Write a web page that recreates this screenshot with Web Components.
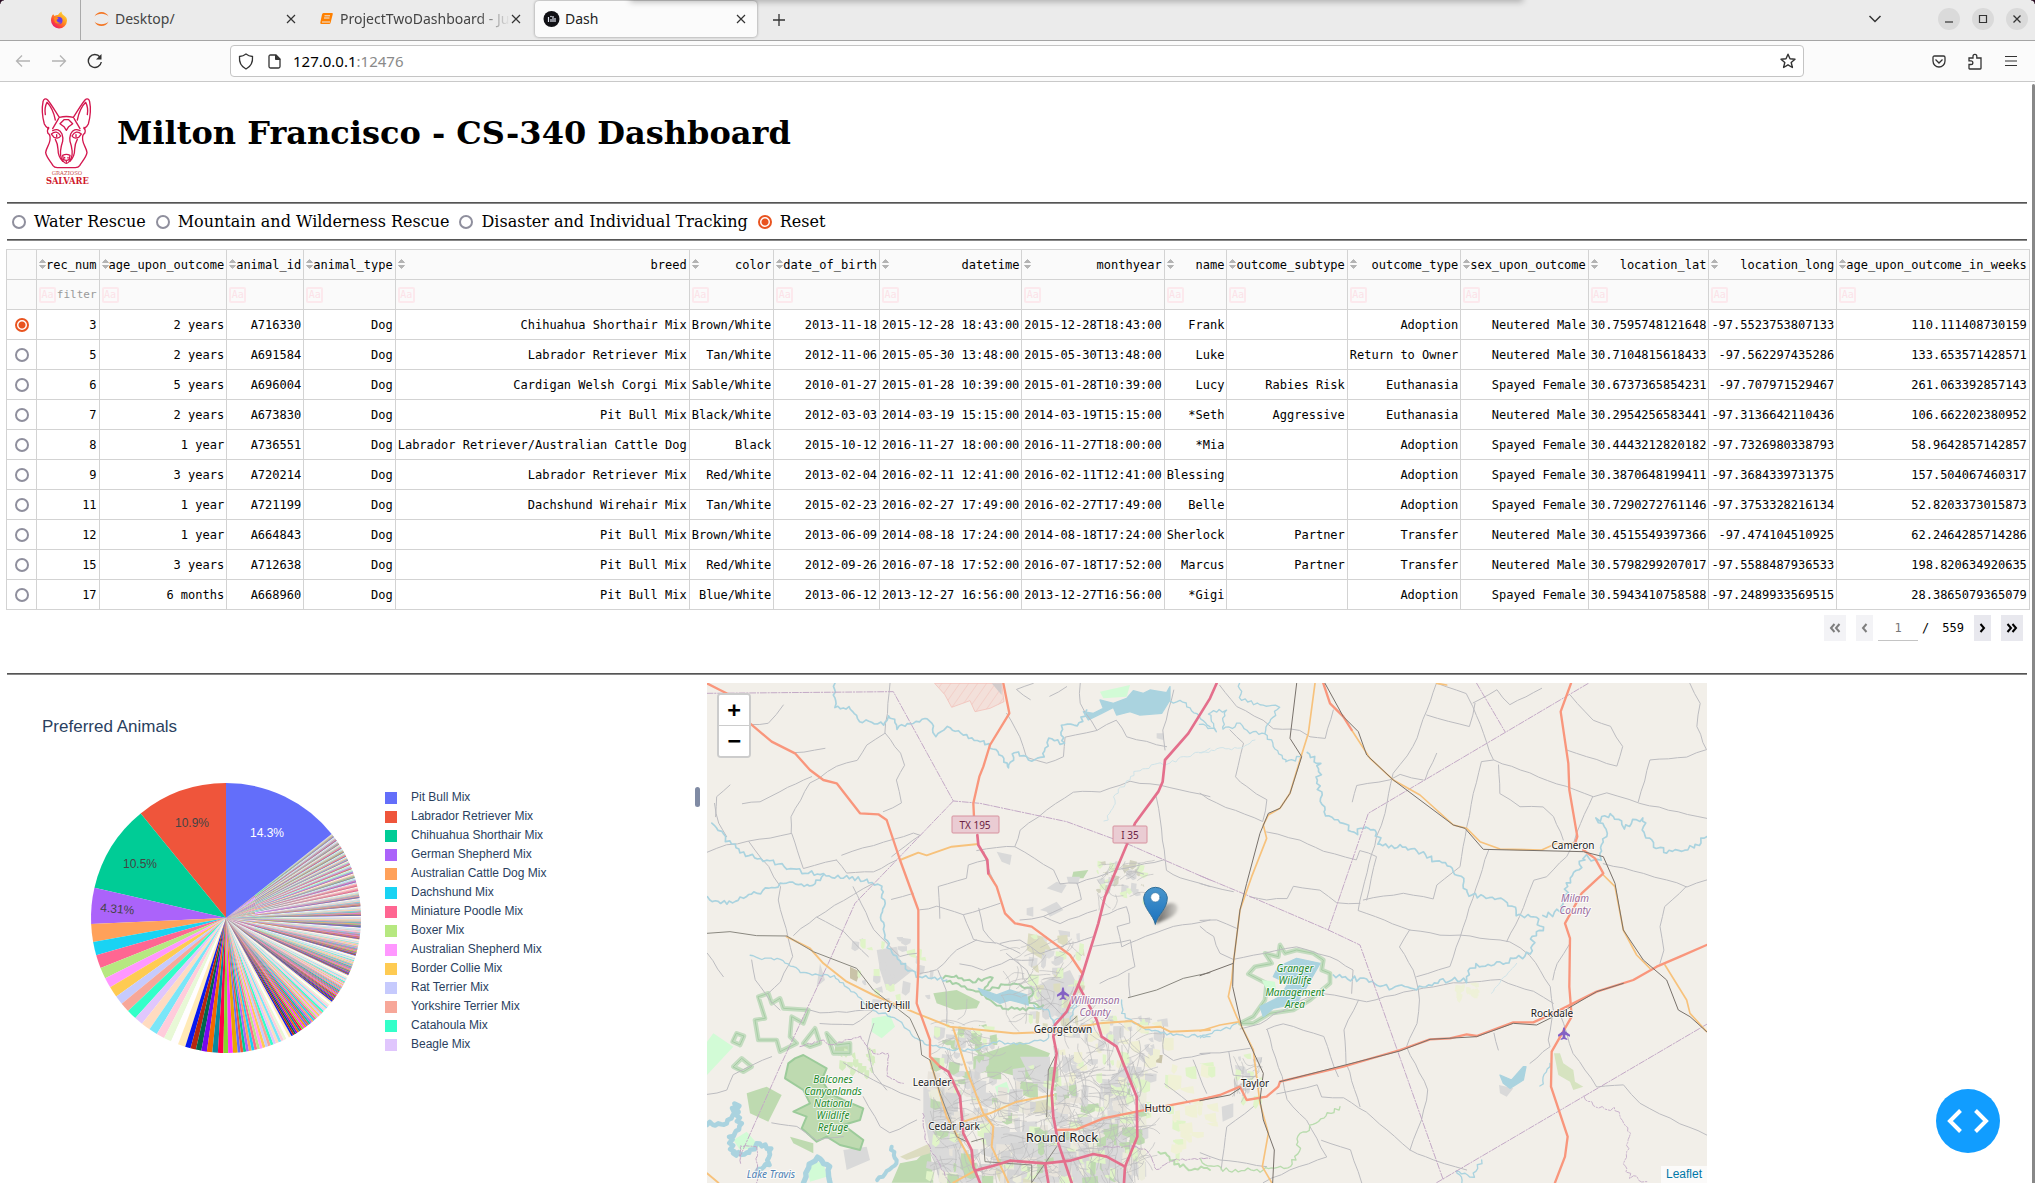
<!DOCTYPE html>
<html lang="en">
<head>
<meta charset="utf-8">
<title>Dash</title>
<style>
  html, body { height: 100%; }
  body { margin: 0; background: #fff; color: #000; font-family: "DejaVu Serif", serif; font-size: 16px; overflow: hidden; }
</style>
</head>
<body>
<dash-window>
  <browser-tab slot="tabs" icon="jupyter">Desktop/</browser-tab>
  <browser-tab slot="tabs" icon="notebook" class="faded">ProjectTwoDashboard - Ju</browser-tab>
  <browser-tab slot="tabs" icon="dash" active>Dash</browser-tab>
  <page-header>Milton Francisco - CS-340 Dashboard</page-header>
  <rule-line></rule-line>
  <rescue-filter></rescue-filter>
  <rule-line></rule-line>
  <animal-table></animal-table>
  <rule-line></rule-line>
  <chart-row>
    <breed-pie>Preferred Animals</breed-pie>
    <geo-map></geo-map>
  </chart-row>
</dash-window>

<script>
const define = (name, html, init) => {
  const t = document.createElement('template');
  t.innerHTML = html;
  customElements.define(name, class extends HTMLElement {
    constructor() {
      super();
      this.attachShadow({ mode: 'open' }).append(t.content.cloneNode(true));
    }
    connectedCallback() {
      if (init && !this.ready) { this.ready = true; init(this.shadowRoot, this); }
    }
  });
};

/* ---------- browser frame ---------- */
define('dash-window', `
<style>
  :host { display: flex; flex-direction: column; height: 100vh; position: relative; overflow: hidden; }
  button { border: 0; background: none; padding: 0; margin: 0; color: #333; display: grid; place-items: center; }
  svg { display: block; fill: none; stroke: currentColor; }
  .strip { display: flex; align-items: center; height: 40px; background: #ebebeb; border-bottom: 1px solid #a5a5a5; flex: none; }
  .pin { width: 81px; height: 40px; box-sizing: border-box; padding-left: 37px; border-right: 1px solid #aaa; display: flex; align-items: center; justify-content: center; }
  .pin svg { stroke: none; }
  .tabs { display: flex; gap: 3px; margin-left: 4px; height: 40px; align-items: flex-start; padding-top: 1px; box-sizing: border-box; }
  .plus { margin-left: 12px; width: 20px; height: 20px; }
  .winctl { margin-left: auto; display: flex; align-items: center; gap: 12px; padding-right: 7px; margin-bottom: 2px; }
  .winctl button { width: 22px; height: 22px; border-radius: 50%; background: #dadada; }
  .winctl .all { background: none; margin-right: 40px; }
  .bar { display: flex; align-items: center; height: 40px; background: #fbfbfb; border-bottom: 1px solid #c9c9c9; flex: none; }
  .nav { display: flex; width: 230px; padding-left: 13px; box-sizing: border-box; gap: 16px; }
  .nav button { width: 20px; height: 20px; }
  .nav .off { color: #b4b4b4; }
  .url { flex: 1; height: 32px; box-sizing: border-box; border: 1px solid #c4c4c4; border-radius: 4px; background: #fff; display: flex; align-items: center; gap: 10px; padding: 0 6px; font: 15px/20px "Noto Sans", sans-serif; }
  .url span { color: #8a8a8a; }
  .url div { flex: 1; }
  .url button { width: 18px; }
  .tools { width: 231px; display: flex; justify-content: flex-end; gap: 16px; padding-right: 14px; box-sizing: border-box; }
  .tools button { width: 20px; height: 20px; }
  .page { flex: 1; overflow: hidden; padding: 0 8px 0 7px; }
  .thumb { position: absolute; right: 0; top: 84px; bottom: 4px; width: 3px; background: #888; border-radius: 2px 2px 0 0; }
  .shade { position: absolute; left: 632px; right: 514px; top: -12px; height: 12px; box-shadow: 0 0 6px 2px rgba(0,0,0,.26); }
  .corner { position: absolute; top: 0; width: 4px; height: 4px; background: radial-gradient(circle at 100% 100%, transparent 3px, #2a0d22 4px); left: 0; }
  .corner.r { left: auto; right: 0; background: radial-gradient(circle at 0 100%, transparent 3px, #2a0d22 4px); }
  .debug { position: absolute; right: 35px; bottom: 34px; width: 64px; height: 64px; border-radius: 50%; background: #119dff; color: #fff; }
</style>
<div class="strip">
  <div class="pin"><svg width="18" height="18" viewBox="0 0 18 18">
    <defs><linearGradient id="f" x1="1" y1="0" x2=".2" y2="1"><stop offset="0" stop-color="#fff14a"/><stop offset=".45" stop-color="#ff9a1f"/><stop offset=".75" stop-color="#ff4538"/><stop offset="1" stop-color="#e0147a"/></linearGradient></defs>
    <path d="M9 17.5A8 8 0 0 1 1 9.300C1 7 2 4.500 3.200 3.300L4.500 5C6 4 6.500 4.200 8 4 9 2.500 10 1.500 11.500.5 11.500 2 12.500 3.500 14 4.500 16.300 6 17 7.500 17 9.800A8 8 0 0 1 9 17.500Z" fill="url(#f)"/>
    <circle cx="9" cy="9.500" r="3.500" fill="#6b3be8"/><path d="M4 7C6 5.500 8 6.500 8.500 7.500L6.500 9C7 11 9 12 11 11.500 9 13.500 5 13 4.500 10Z" fill="#ff8a1c"/></svg></div>
  <div class="tabs"><slot name="tabs"></slot></div>
  <button class="plus" aria-label="New tab"><svg width="14" height="14"><path d="M7 1v12M1 7h12" stroke-width="1.300"/></svg></button>
  <div class="winctl">
    <button class="all" aria-label="List all tabs"><svg width="14" height="10"><path d="M1.500 2L7 7.500 12.500 2" stroke-width="1.500"/></svg></button>
    <button aria-label="Minimize"><svg width="10" height="10"><path d="M1 8h8" stroke-width="1.200"/></svg></button>
    <button aria-label="Maximize"><svg width="10" height="10"><path d="M1.500 1.500h7v7h-7z" stroke-width="1.200"/></svg></button>
    <button aria-label="Close window"><svg width="10" height="10"><path d="M1.500 1.500l7 7M8.500 1.500l-7 7" stroke-width="1.300"/></svg></button>
  </div>
</div>
<div class="bar">
  <div class="nav">
    <button class="off" aria-label="Back"><svg width="16" height="14"><path d="M15 7H1.500M7 1.500L1.500 7 7 12.500" stroke-width="1.300"/></svg></button>
    <button class="off" aria-label="Forward"><svg width="16" height="14"><path d="M1 7h13.500M9 1.500L14.500 7 9 12.500" stroke-width="1.300"/></svg></button>
    <button aria-label="Reload"><svg width="16" height="16"><path d="M14.300 9A6.500 6.500 0 1 1 13 4" stroke-width="1.400"/><path d="M14.500 1v5.500H9z" fill="currentColor" stroke="none"/></svg></button>
  </div>
  <div class="url">
    <button aria-label="Tracking protection"><svg width="16" height="17"><path d="M8 1C6 2.600 4 3.300 1.500 3.500 1 9 3 13.500 8 16 13 13.500 15 9 14.500 3.500 12 3.300 10 2.600 8 1Z" stroke-width="1.300"/></svg></button>
    <button aria-label="Site information"><svg width="13" height="15"><path d="M8 1H2.500Q1 1 1 2.500v10Q1 14 2.500 14h8Q12 14 12 12.500V5z" stroke-width="1.300"/><path d="M7.500 1v4.500H12z" fill="currentColor"/></svg></button>
    <div>127.0.0.1<span>:12476</span></div>
    <button aria-label="Bookmark"><svg width="16" height="16"><path d="M8 1.200l2 4.600 5 .4-3.800 3.300 1.200 5L8 11.800l-4.400 2.700 1.200-5L1 6.200l5-.4z" stroke-width="1.400" stroke-linejoin="round"/></svg></button>
  </div>
  <div class="tools">
    <button aria-label="Pocket"><svg width="14" height="13"><path d="M1 2.500Q1 1 2.500 1h9Q13 1 13 2.500V6A6 6 0 0 1 1 6ZM3.500 4.500L7 8l3.500-3.500" stroke-width="1.300"/></svg></button>
    <button aria-label="Extensions"><svg width="14" height="17"><path d="M1 15.300V11.500H3A1.800 1.800 0 0 0 3 7.800H1V5H5V3.300A1.900 1.900 0 0 1 8.800 3.300V5H13V15.300Q13 16 12.300 16H1.700Q1 16 1 15.300Z" stroke-width="1.300"/></svg></button>
    <button aria-label="Menu"><svg width="12" height="12"><path d="M0 1.500h12M0 6h12M0 10.500h12" stroke-width="1.200"/></svg></button>
  </div>
</div>
<div class="page"><slot></slot></div>
<div class="shade"></div>
<div class="corner"></div><div class="corner r"></div>
<div class="thumb"></div>
<button class="debug" aria-label="Debug menu"><svg width="42" height="24" stroke-width="4"><path d="M13.500 1.500L3 12 13.500 22.500M28.500 1.500L39 12 28.500 22.500"/></svg></button>
`);

const tabIcons = {
  jupyter: '<path d="M1.500 6.500C4 .5 13 .5 15.500 6.500 12.500 2.800 4.500 2.800 1.500 6.500ZM1.500 11.500C4 17.500 13 17.500 15.500 11.500 12.500 15.200 4.500 15.200 1.500 11.500Z" fill="#f37726"/>',
  notebook: '<path d="M5.500 3h8.500q1 0 .8 1L12.500 13q-.3 1-1.300 1H3.500Q2 14 2.300 12.500L4 4.500Q4.300 3 5.500 3Z" fill="#ff8000"/><path d="M6.500 5.800h5.500M6 8h5.500M4 12h8" stroke="#ebebeb" stroke-width="1"/>',
  dash: '<circle cx="8.500" cy="9" r="8" fill="#101014"/><path d="M5.500 7v5M8 9v3M10 6v6M12 8v4" stroke="#dfe3ee" stroke-width="1.200"/><circle cx="8" cy="6.500" r=".8" fill="#dfe3ee"/>'
};
define('browser-tab', `
<style>
  :host { display: flex; align-items: center; box-sizing: border-box; width: 222px; height: 36px; padding: 0 10px 0 8px; font: 14px/20px "Noto Sans", sans-serif; color: #444; border-radius: 4px; }
  :host([active]) { background: #fbfbfb; box-shadow: 0 0 3px rgba(0,0,0,.4); color: #222; }
  span { flex: 1; margin-left: 5px; white-space: nowrap; overflow: hidden; }
  :host(.faded) span { -webkit-mask-image: linear-gradient(to left, transparent, #000 32px); mask-image: linear-gradient(to left, transparent, #000 32px); }
  button { border: 0; background: none; padding: 0; width: 12px; height: 12px; display: grid; place-items: center; }
</style>
<svg width="17" height="18" fill="none"></svg><span><slot></slot></span>
<button aria-label="Close tab"><svg width="10" height="10" stroke="#333" stroke-width="1.200"><path d="M1 1l8 8M9 1l-8 8"/></svg></button>`,
(r, h) => { r.querySelector('svg').innerHTML = tabIcons[h.getAttribute('icon')]; });

/* ---------- page pieces ---------- */
define('rule-line', `<style>:host{display:block;height:2px;box-sizing:border-box;border-top:1px solid #555;border-bottom:1px solid #888}</style>`);

define('page-header', `
<style>
  :host { display: flex; align-items: flex-start; gap: 25px; padding: 16px 0 17px 34px; }
  h1 { margin: 17px 0 0; font: bold 32px/37px "DejaVu Serif", serif; }
  svg { display: block; overflow: visible; }
</style>
<svg width="51" height="87" viewBox="123 294 153 261" fill="none" stroke="#d4174f" stroke-width="4" stroke-linecap="round" stroke-linejoin="round">
  <path d="M178 352C166 334 156 316 143 300C136 293 130 298 129 306C124 330 127 350 133 372C136 379 141 383 146 386M220 352C232 334 242 316 255 300C262 293 268 298 269 306C274 330 271 350 265 372C262 379 257 383 252 386"/>
  <path d="M166 360C162 340 154 320 141 307C135 318 134 332 136 344M232 360C236 340 244 320 257 307C263 318 264 332 262 344M178 352Q199 347 220 352M176 355L158 386M222 355L240 386"/>
  <path d="M146 382Q140 392 144 400Q152 404 150 420C148 436 138 444 137 458C140 474 152 484 159 497Q163 503 172 503H226Q235 503 239 497C246 484 258 474 261 458C260 444 250 436 248 420Q246 404 254 400Q258 392 252 382"/>
  <path d="M180 371L192 359H206L218 371L206 380L199 391L192 380ZM158 392Q176 382 186 402Q190 414 188 424C182 442 178 458 184 474Q192 490 199 490Q206 490 214 474C220 458 216 442 210 424Q208 414 212 402Q222 382 240 392"/>
  <path d="M154 402Q170 388 182 408Q176 418 162 412ZM244 402Q228 388 216 408Q222 418 236 412ZM170 404v6M228 404v6M166 418Q173 430 174 448Q174 470 188 484M232 418Q225 430 224 448Q224 470 210 484M188 466Q199 460 210 466L208 478Q199 484 190 478ZM194 472v2M204 472v2M199 482v5"/>
  <g fill="#d0182c" stroke="none" text-anchor="middle" font-family="DejaVu Serif, serif"><text x="201" y="525" font-size="16" fill="#c8524f">GRAZIOSO</text><text x="202" y="553" font-size="25" font-weight="bold">SALVARE</text></g>
</svg>
<h1><slot></slot></h1>`);

const radioCss = `input[type=radio]{appearance:none;margin:0;width:14px;height:14px;box-sizing:border-box;border:2px solid #8f8f9d;border-radius:50%;background:#fff;flex:none}
input[type=radio]:checked{border-color:#e95420;background:radial-gradient(circle,#e95420 3px,#fff 4px)}`;

define('rescue-filter', `
<style>${radioCss}
  :host { display: flex; align-items: center; gap: 10px; height: 35px; padding-left: 5px; }
  label { display: flex; align-items: center; gap: 8px; line-height: 19px; }
</style>
<label><input type="radio" name="rescue">Water Rescue</label>
<label><input type="radio" name="rescue">Mountain and Wilderness Rescue</label>
<label><input type="radio" name="rescue">Disaster and Individual Tracking</label>
<label><input type="radio" name="rescue" checked>Reset</label>`);

const columns = 'rec_num age_upon_outcome animal_id animal_type breed color date_of_birth datetime monthyear name outcome_subtype outcome_type sex_upon_outcome location_lat location_long age_upon_outcome_in_weeks'.split(' ');
const records = `3|2 years|A716330|Dog|Chihuahua Shorthair Mix|Brown/White|2013-11-18|2015-12-28 18:43:00|2015-12-28T18:43:00|Frank||Adoption|Neutered Male|30.7595748121648|-97.5523753807133|110.111408730159
5|2 years|A691584|Dog|Labrador Retriever Mix|Tan/White|2012-11-06|2015-05-30 13:48:00|2015-05-30T13:48:00|Luke||Return to Owner|Neutered Male|30.7104815618433|-97.562297435286|133.653571428571
6|5 years|A696004|Dog|Cardigan Welsh Corgi Mix|Sable/White|2010-01-27|2015-01-28 10:39:00|2015-01-28T10:39:00|Lucy|Rabies Risk|Euthanasia|Spayed Female|30.6737365854231|-97.707971529467|261.063392857143
7|2 years|A673830|Dog|Pit Bull Mix|Black/White|2012-03-03|2014-03-19 15:15:00|2014-03-19T15:15:00|*Seth|Aggressive|Euthanasia|Neutered Male|30.2954256583441|-97.3136642110436|106.662202380952
8|1 year|A736551|Dog|Labrador Retriever/Australian Cattle Dog|Black|2015-10-12|2016-11-27 18:00:00|2016-11-27T18:00:00|*Mia||Adoption|Spayed Female|30.4443212820182|-97.7326980338793|58.9642857142857
9|3 years|A720214|Dog|Labrador Retriever Mix|Red/White|2013-02-04|2016-02-11 12:41:00|2016-02-11T12:41:00|Blessing||Adoption|Spayed Female|30.3870648199411|-97.3684339731375|157.504067460317
11|1 year|A721199|Dog|Dachshund Wirehair Mix|Tan/White|2015-02-23|2016-02-27 17:49:00|2016-02-27T17:49:00|Belle||Adoption|Spayed Female|30.7290272761146|-97.3753328216134|52.8203373015873
12|1 year|A664843|Dog|Pit Bull Mix|Brown/White|2013-06-09|2014-08-18 17:24:00|2014-08-18T17:24:00|Sherlock|Partner|Transfer|Neutered Male|30.4515549397366|-97.474104510925|62.2464285714286
15|3 years|A712638|Dog|Pit Bull Mix|Red/White|2012-09-26|2016-07-18 17:52:00|2016-07-18T17:52:00|Marcus|Partner|Transfer|Neutered Male|30.5798299207017|-97.5588487936533|198.820634920635
17|6 months|A668960|Dog|Pit Bull Mix|Blue/White|2013-06-12|2013-12-27 16:56:00|2013-12-27T16:56:00|*Gigi||Adoption|Spayed Female|30.5943410758588|-97.2489933569515|28.3865079365079`.split('\n').map(l => l.split('|'));

define('animal-table', `
<style>${radioCss}
  :host { display: block; margin-top: 8px; margin-bottom: 32px; font: 12px/15px "DejaVu Sans Mono", monospace; }
  table { width: max-content; border-collapse: separate; border-spacing: 0; border-top: 1px solid #d3d3d3; border-left: 1px solid #d3d3d3; margin-left: -1px; }
  th, td { height: 30px; box-sizing: border-box; padding: 1px 2px 0; border-right: 1px solid #d3d3d3; border-bottom: 1px solid #d3d3d3; text-align: right; font-weight: normal; white-space: nowrap; }
  thead tr { background: #fafafa; }
  .pick { width: 30px; min-width: 30px; text-align: center; padding: 0; }
  .pick input { vertical-align: middle; }
  .head, .find { display: flex; align-items: center; justify-content: space-between; }
  .sort { border: 0; background: none; padding: 0; width: 7px; height: 12px; display: block; margin-bottom: 2px; }
  .sort svg { display: block; fill: #b4b4b4; stroke: #b4b4b4; stroke-linejoin: round; }
  .case { border: 2px solid #fce9ed; border-radius: 2px; background: none; color: #fce2e8; font: 10px/10px "DejaVu Sans Mono", monospace; padding: 0; width: 17px; height: 16px; flex: none; }
  .find input { border: 0; background: none; outline: 0; padding: 0; margin: 0; width: 0; flex: 1; min-width: 0; height: 20px; text-align: right; font: 11px/20px "DejaVu Sans Mono", monospace; }
  .find input::placeholder { color: #999; opacity: 1; }
  .pager { display: flex; justify-content: flex-end; align-items: center; height: 26px; padding: 5px 4px 0 0; }
  .pager button { border: 0; padding: 0; height: 26px; background: #e8e8ee; display: grid; place-items: center; }
  .pager button:disabled { opacity: .5; }
  .wide { width: 22px; } .thin { width: 17px; }
  .pager svg { fill: none; stroke: #000; stroke-width: 2; }
  .pager input { border: 0; border-bottom: 1px solid #c4c4c4; width: 40px; height: 26px; box-sizing: border-box; text-align: center; margin: 0 4px 0 5px; padding: 0; background: none; font: 12px/26px "DejaVu Sans Mono", monospace; color: #777; }
  .pager .slash { margin-right: 13px; }
  .pager .total, .pager .gap { margin-right: 10px; }
</style>
<table><thead></thead><tbody></tbody></table>
<div class="pager">
  <button class="wide gap" disabled aria-label="First page"><svg width="12" height="10"><path d="M5.500 1L2 5l3.500 4M10.500 1L7 5l3.500 4"/></svg></button>
  <button class="thin" disabled aria-label="Previous page"><svg width="7" height="10"><path d="M5.500 1L2 5l3.500 4"/></svg></button>
  <input aria-label="Page" value="1"><span class="slash">/</span><span class="total">559</span>
  <button class="thin gap" aria-label="Next page"><svg width="7" height="10"><path d="M1.500 1L5 5 1.500 9"/></svg></button>
  <button class="wide" aria-label="Last page"><svg width="12" height="10"><path d="M1.500 1L5 5 1.500 9M6.500 1L10 5 6.500 9"/></svg></button>
</div>`, r => {
  const sort = n => `<button class="sort" aria-label="Sort by ${n}"><svg width="7" height="12"><path d="M3.500 1.500L6.500 4.500H.5zM3.500 10.500L6.500 7.500H.5z"/></svg></button>`;
  r.querySelector('thead').innerHTML =
    '<tr><th class="pick"></th>' + columns.map(c => `<th><div class="head">${sort(c)}${c}</div></th>`).join('') + '</tr>' +
    '<tr><td class="pick"></td>' + columns.map((c, i) => `<td><div class="find"><button class="case">Aa</button><input aria-label="Filter ${c}"${i ? '' : ' placeholder="filter"'}></div></td>`).join('') + '</tr>';
  r.querySelector('tbody').innerHTML = records.map((d, i) =>
    `<tr><td class="pick"><input type="radio" name="row" aria-label="Select record ${d[0]}"${i ? '' : ' checked'}></td>` +
    d.map(v => `<td>${v}</td>`).join('') + '</tr>').join('');
});

define('chart-row', `<style>:host{display:flex;align-items:flex-start;margin-top:8px}</style><slot></slot>`);

/* ---------- pie ---------- */
const baseHues = ['636efa','EF553B','00cc96','ab63fa','FFA15A','19d3f3','FF6692','B6E880','FF97FF','FECB52'];
const shade = (hex, d) => {
  const [r, g, b] = [0, 2, 4].map(i => parseInt(hex.substr(i, 2), 16) / 255);
  const mx = Math.max(r, g, b), mn = Math.min(r, g, b), l = (mx + mn) / 2, c = mx - mn;
  const s = c / (1 - Math.abs(2 * l - 1));
  const h = 60 * (mx === r ? ((g - b) / c + 6) % 6 : mx === g ? (b - r) / c + 2 : (r - g) / c + 4);
  return `hsl(${h.toFixed(1)},${(s * 100).toFixed(1)}%,${Math.max(0, Math.min(100, l * 100 + d)).toFixed(1)}%)`;
};
const palette = [0, 20, -20].flatMap(d => baseHues.map(h => shade(h, d)));
const breeds = ['Pit Bull Mix','Labrador Retriever Mix','Chihuahua Shorthair Mix','German Shepherd Mix','Australian Cattle Dog Mix','Dachshund Mix','Miniature Poodle Mix','Boxer Mix','Australian Shepherd Mix','Border Collie Mix','Rat Terrier Mix','Yorkshire Terrier Mix','Catahoula Mix','Beagle Mix'];

define('breed-pie', `
<style>
  :host { display: block; width: 700px; height: 500px; flex: none; box-sizing: border-box; padding: 33px 7px 0 35px; color: #2a3f5f; font: 12px/19px "Liberation Sans", sans-serif; }
  h2 { margin: 0 0 44px; font: 17px/22px "Liberation Sans", sans-serif; }
  .plot { display: flex; align-items: flex-start; }
  .pie { display: block; margin-left: 48px; }
  ul { list-style: none; margin: 6px 0 0 23px; padding: 0; flex: 1; }
  li { display: flex; align-items: center; gap: 14px; height: 19px; }
  li i { width: 12px; height: 12px; }
  .bar { width: 5px; height: 20px; border-radius: 3px; background: #808ba4; margin-top: 5px; }
</style>
<h2><slot></slot></h2>
<div class="plot"><svg class="pie" width="272" height="272" viewBox="-136 -136 272 272"></svg><ul></ul><div class="bar"></div></div>`, r => {
  const knots = [[1,-90],[2,-50.8],[3,-13],[4,2.6],[5,10.2],[6,16],[7,21.7],[8,26.5],[9,30.9],[10,35.6],[11,39.4],[12,43.5],[13,47.8],[14,51.5],[15,55.5],[16,59.2],[17,62.7],[18,66],[19,69.2],[20,72.4],[27,88.9],[30,95],[50,119],[80,141.7],[110,155],[140,163.8],[170,170.9],[200,176],[230,181],[260,185],[290,188.5],[320,191.5],[735,218.5]];
  const at = deg => { const a = (deg + 90) * Math.PI / 180; return (-135 * Math.sin(a)).toFixed(2) + ' ' + (-135 * Math.cos(a)).toFixed(2); };
  const wedge = (a, b, c) => `<path d="M0 0L${at(a)}A135 135 0 0 0 ${at(b)}Z" fill="${c}"/>`;
  let out = '';
  for (let k = 0; k < knots.length - 1; k++) {
    const [i0, a0] = knots[k], [i1, a1] = knots[k + 1], st = (a1 - a0) / (i1 - i0);
    for (let i = i0; i < i1; i++) out += wedge(a0 + (i - i0) * st, a0 + (i - i0 + 1) * st, palette[i % 30]);
  }
  out += wedge(218.5, 270, palette[0]);
  out += '<g font-size="12" text-anchor="middle" fill="#444"><text x="41" y="-81" fill="#fff">14.3%</text><text x="-34" y="-91">10.9%</text><text x="-86" y="-50">10.5%</text><text transform="translate(-109 -5) rotate(5)">4.31%</text></g>';
  r.querySelector('.pie').innerHTML = out;
  r.querySelector('ul').innerHTML = breeds.map((b, i) => `<li><i style="background:${palette[i]}"></i>${b}</li>`).join('');
});

/* ---------- map ---------- */
let seed = 7;
const rnd = () => (seed = (seed * 16807) % 2147483647) / 2147483647;
const pts = s => { const n = s.trim().split(/[ ,]+/).map(Number), o = []; for (let i = 0; i < n.length; i += 2) o.push([n[i], n[i + 1]]); return o; };
const wiggle = (s, amp, step = 9) => {
  const p = pts(s), o = [];
  for (let i = 0; i < p.length - 1; i++) {
    const [x, y] = p[i], dx = p[i + 1][0] - x, dy = p[i + 1][1] - y, L = Math.hypot(dx, dy), n = Math.max(1, Math.round(L / step));
    for (let k = 0; k < n; k++) { const j = (rnd() - .5) * 2 * amp; o.push([x + dx * k / n - dy / L * j, y + dy * k / n + dx / L * j]); }
  }
  o.push(p[p.length - 1]);
  return o;
};
const line = (p, color, w, extra = '') => `<polyline points="${p.map(q => q.map(v => v.toFixed(1)).join()).join(' ')}" stroke="${color}" stroke-width="${w}" ${extra}/>`;
const many = (list, color, w, extra, amp = 0, step) => list.map(s => line(amp ? wiggle(s, amp, step) : pts(s), color, w, extra)).join('');
const area = (list, color, extra = '') => list.map(s => `<polygon points="${s}" fill="${color}" ${extra}/>`).join('');
const scatter = (n, x0, y0, x1, y1, size, colors) => {
  let o = '';
  for (let i = 0; i < n; i++) {
    const x = x0 + rnd() * (x1 - x0), y = y0 + rnd() * (y1 - y0), w = size * (.4 + rnd()), h = size * (.4 + rnd()), k = (rnd() - .5) * 14;
    o += `<path d="M${x.toFixed(0)} ${y.toFixed(0)}l${w.toFixed(0)} ${k.toFixed(0)} ${(-k / 2).toFixed(0)} ${h.toFixed(0)} ${(-w / 2).toFixed(0)} ${(k + 4).toFixed(0)} ${(-w / 2).toFixed(0)} -8z" fill="${colors[Math.floor(rnd() * colors.length)]}"/>`;
  }
  return o;
};
const streets = (n, x0, y0, x1, y1, len) => {
  let o = '';
  for (let i = 0; i < n; i++) {
    let x = x0 + rnd() * (x1 - x0), y = y0 + rnd() * (y1 - y0), a = (rnd() < .5 ? -.3 : Math.PI / 2 - .3) + (rnd() - .5) * .8, d = `M${x.toFixed(0)} ${y.toFixed(0)}`;
    const bend = (rnd() - .5) * .9;
    for (let k = 0; k < 6; k++) { x += Math.cos(a) * len / 6; y += Math.sin(a) * len / 6; a += bend * rnd() + (rnd() - .5) * .3; d += `L${x.toFixed(0)} ${y.toFixed(0)}`; }
    o += `<path d="${d}"/>`;
  }
  return `<g stroke="#bcbcbe" stroke-width="2">${o}</g>`;
};

function drawMap() {
  const water = '#aad3df', grey = '#d9d9d9', wood = '#bedab0', park = '#d2fbd6', lime = '#e0f4c8';
  const minorL = ['21,545 80,525 145,515 275,490 310,595 410,570', '145,515 205,590 240,650 235,690 280,860 240,935 205,970', '275,490 272,440 330,340 410,290 470,270 500,225 555,190 570,40', '555,190 600,250 612,285 590,330 605,400 550,425', '127,400 180,395 240,365 335,320', '45,440 50,380 90,345', '45,400 55,460 80,500', '150,165 205,160 250,105', '280,250 375,235', '410,570 440,610 520,605 590,570', '425,555 520,525 640,490 660,495 575,560', '350,740 430,690 520,640', '280,795 350,740 430,785 505,860', '460,650 520,780 600,860 650,850', '575,690 640,670', '660,720 710,710 790,735 900,700', '720,745 715,650 800,625 805,585 860,570', '790,735 820,810 890,820 960,850', '660,910 710,900 770,840 830,810', '715,900 740,960 740,1060', '780,880 850,900 930,870 1000,870', '830,540 920,530 945,530 1060,600 1080,640 1130,640 1145,690 1030,740 960,750', '850,545 870,610 890,650', '945,530 960,480 1040,420 1120,365 1200,365 1290,335 1380,345 1530,380', '920,130 960,200 980,260 1040,280 1090,260 1095,200 1190,180 1250,150 1280,200 1400,230', '1140,40 1140,100 1190,180', '1370,380 1380,450 1400,600 1440,625 1530,650', '1130,640 1250,600 1390,570', '1030,740 1080,760 1190,720', '1050,840 1180,800', '1200,740 1280,710 1290,760 1250,770 1265,830 1310,810 1420,770 1530,750', '1180,830 1290,810 1305,890 1200,940', '1285,910 1290,980', '920,850 980,900 1020,970 1080,1030', '900,820 960,810 1020,850 1090,830', '330,1020 360,1030 440,1025 520,1020', '360,1060 460,1065 520,1020', '155,870 165,930 210,990 240,1020', '21,850 70,920', '21,1275 80,1260 100,1215 160,1185 215,1160', '520,1060 500,1130 520,1210 560,1260', '430,1180 520,1230 600,1270 660,1290', '490,1280 540,1370 570,1390 650,1350', '215,1360 290,1370 350,1410 430,1400', '1390,1070 1390,1150 1420,1170 1530,1150', '1480,1170 1520,1270', '1395,1240 1470,1300', '990,90 950,60 1000,40', '1050,80 1100,50', '1420,60 1390,180 1395,240', '835,715 850,780 885,820'];
  const minorR = ['0,370 50,400 190,455 200,390 140,350 105,320 130,220 90,180', '60,45 110,110 190,150 220,175 300,180 330,200 375,205 400,120', '710,40 640,230 580,310 555,430 530,500 480,690 475,720 630,780 720,795 780,795 930,815 990,855 1050,950 1060,1020', '710,40 800,70 820,110 880,270 1180,380 1220,370 1320,400 1520,445', '680,135 810,170 825,100', '820,100 890,60 930,105 1025,55', '1110,75 1180,150 1230,170 1270,230 1250,290 1100,240', '1470,40 1500,100 1490,170 1520,240 1460,260 1350,270 1315,395', '880,270 845,275 820,370 800,470 780,590 710,645 700,685 610,670 490,690', '200,485 300,510 370,545 470,570 480,540 530,560 500,690', '150,680 200,690 260,685 280,650 360,660 410,700 480,700', '895,285 900,370 960,410 1030,410 1060,440 1090,510', '1180,380 1140,460 1120,520 1100,560 1040,620 1000,630 960,740 920,815', '1210,580 1330,610 1400,630 1460,650 1520,630', '1460,650 1395,710 1380,770 1390,840 1380,880', '865,540 750,890 650,920', '630,780 600,830 640,900 660,990 650,1060 620,1130 685,1260 665,1350 630,1440', '0,640 100,665', '0,750 50,750 110,775', '0,770 40,800 60,850 100,870 190,850 290,830 390,860 460,900 455,970', '370,970 500,995 640,960 760,940 900,930 1000,965 1060,1000', '120,1075 180,1060 220,1035 330,980', '200,1080 250,1060 370,1100 415,1220', '200,1080 245,1220 260,1290 320,1350 380,1460 270,1500 190,1538', '475,990 430,1080 440,1180 480,1310', '230,1270 350,1245 365,1280 430,1285 500,1325 560,1380 630,1440 700,1470 800,1500', '0,1150 60,1150 150,1135', '85,1145 100,1215 170,1220', '0,1450 60,1470 140,1480 200,1490', '65,1500 80,1370 160,1310', '365,1410 450,1440 485,1538', '1060,1020 1045,1110 1050,1130 990,1180', '1080,1030 1120,1150 1190,1250 1270,1245 1320,1300 1440,1360 1520,1395', '880,1090 895,1140', '455,395 470,345 570,330 600,315 670,330', '675,330 710,250', '1060,930 1070,880 1110,820'];
  const riverL = ['400,40 405,110 455,115 480,150 550,165 570,135 590,175 640,160 685,145 705,195 740,175 850,215 880,235 930,295 945,245 985,270 1030,260 1045,210 1090,220 1085,170 1140,160 1160,120', '35,460 80,510 130,550 200,570 280,600 370,615 500,630 540,650 550,700 545,760 570,840 605,880 650,915 740,930', '21,685 80,700 180,665 260,640 330,650 370,615'];
  const creekL = ['150,860 240,870 310,910 400,920 460,970 520,1020 600,1050 650,1110 740,1140 830,1140 880,1115 950,1120 1040,1110 1060,1060 1130,1000 1110,1050', '1265,990 1265,1030 1320,1070 1420,1095 1530,1100', '1410,95 1450,95 1530,170', '1000,1010 1040,1020 1060,1060'];
  const riverR = ['320,250 360,280 355,330 370,430 430,460 470,490 500,465 530,480 540,530 600,525 660,545 740,590 780,620 800,670 850,680 920,690 950,730 1000,740 1030,770 1000,800 990,850 900,880 820,890 800,930 720,930 650,955 550,950 480,930 400,915', '1030,740 1090,720 1100,640 1140,600 1150,560 1200,570 1215,480 1190,450 1240,430 1270,470 1325,445 1345,510 1400,550 1480,530 1520,500'];
  const creekR = ['0,160 50,185 25,130 75,120 70,180 120,160 150,185 195,190 260,280 300,260', '115,40 125,90 180,105 235,110 195,190', '0,1100 80,1075 110,1060', '790,1538 770,1500 820,1520 845,1470', '1025,1250 1050,1180'];
  const orangeL = ['21,40 60,60 90,75', '150,160 215,215 285,250 330,300 370,330 410,340 480,430 535,433 560,450 600,570 655,720 655,900 650,1000 690,1110 690,1160 720,1190', '910,40 928,130 870,225 850,290 838,320 820,400 822,440', '865,610 890,650 915,730 945,760 995,770 1110,855 1148,912', '1070,1380 1130,1378 1210,1345 1310,1325 1530,1283'];
  const orangeR = ['370,40 390,100 430,140 455,180', '1113,40 1082,125 1105,280 1108,360 1132,500 1125,520', '1150,540 1185,565 1210,610 1145,670 1095,760 1110,805 1108,950 1115,1040 1055,1145 1053,1250 1103,1400 1095,1460 1065,1538', '0,1290 60,1275 120,1250 140,1290 200,1280 235,1250 240,1235 430,1190 600,1140 690,1108 750,1105 800,1093 830,1098 940,1057 1000,1057 1070,1025 1190,965 1300,930 1370,890 1440,860 1520,825'];
  const yellowL = ['260,800 330,835 370,880 440,935 520,975 650,1030 750,1070 940,1090 1060,1085 1200,1060 1295,1053 1330,1073 1380,1070 1410,1085 1530,1080', '600,570 655,548 680,556 755,530 835,522', '760,1075 800,1200 850,1330 880,1370 875,1430 925,1538', '790,1355 870,1330 950,1295 1060,1275', '690,1170 740,1340 800,1450 820,1490', '760,1538 820,1505', '21,1510 55,1538'];
  const yellowR = ['345,40 325,190 300,270 270,370 240,415 205,435 190,465 200,505 155,620 120,720 100,880 95,930 85,980 110,1040 160,1140 180,1300 205,1390 187,1490 215,1538', '455,180 510,265 580,330 660,375 760,465 800,475 840,515 900,537 1025,540 1070,520 1120,520', '1210,615 1245,650 1270,780 1310,855 1350,895', '1395,885 1460,990 1470,1030 1520,1085', '0,1083 60,1065 120,1055', '710,40 740,45'];
  const railL = ['21,790 90,785 170,797 260,798 340,845 470,895 520,960 630,1045 660,1110 665,1155 690,1170 720,1270 770,1400 800,1415', '1040,1340 1045,1200 1070,1150 1060,1100 1130,1040', '815,1415 850,1405 855,1475 920,1480 995,1485 995,1538 1070,1430', '1285,983 1370,960 1450,925 1530,908'];
  const railR = ['290,40 270,205 305,260 270,370 240,415 205,430 180,490 140,640 120,720 100,880 98,950 125,1070 190,1210 180,1290 190,1350 223,1440 218,1538', '375,40 430,140 475,185 500,255 580,330 760,465 795,475 850,538 1150,545 1210,560 1245,640 1270,780 1330,870 1400,930 1435,1020 1470,1040 1520,1085', '0,917 100,880', '0,1292 90,1275 120,1255', '240,1235 600,1143 690,1108 830,1100 940,1060 1010,1065 1070,1035 1190,965 1270,940'];
  const boundL = ['21,70 580,65 760,393 840,400 1100,455 1290,525 1530,630', '760,393 465,700 385,880 240,1190 120,1460'];
  const boundR = ['0,617 140,675 385,780 505,430 1165,40', '385,780 480,825 730,1530', '830,40 915,185', '710,1538 1150,1280 1520,1063'];
  const dash = 'stroke-dasharray="18 5 4 5"';
  const reserve = ['285,1165 310,1155 380,1195 365,1230 390,1270 430,1290 490,1315 480,1350 430,1365 490,1410 480,1440 420,1425 380,1400 350,1415 305,1375 320,1340 280,1325 330,1300 310,1260 255,1225 265,1180'];
  const outlines = ['175,980 205,970 215,1000 240,985 250,1015 325,1020 310,1060 275,1040 270,1100 290,1120 240,1145 230,1110 175,1110 165,1050 195,1045', '110,1090 132,1098 120,1125 98,1115', '310,1120 345,1075 360,1120 330,1130', '380,1090 410,1125 450,1120 450,1150 400,1150', '100,1190 125,1165 155,1190 130,1205', '1665,890 1645,912 1700,940 1695,990 1660,1040 1620,1060 1660,1060 1710,1030 1780,1020 1830,990 1890,940 1890,910 1865,900 1870,870 1840,850 1790,840 1755,850 1740,825 1735,860 1695,850 1715,880'];
  return `
  <defs><pattern id="h" width="22" height="22" patternUnits="userSpaceOnUse" patternTransform="rotate(35)"><rect width="22" height="22" fill="#f3e0da"/><path d="M0 0V22" stroke="#f2c3bb" stroke-width="3"/></pattern>
  <linearGradient id="pin" x1="0" y1="0" x2="0" y2="1"><stop offset="0" stop-color="#4a96cc"/><stop offset="1" stop-color="#1a72bf"/></linearGradient>
  <linearGradient id="cast" x1="0" y1="0" x2="1" y2="0"><stop offset="0" stop-color="#000" stop-opacity=".6"/><stop offset="1" stop-color="#000" stop-opacity=".12"/></linearGradient>
  <filter id="soft" x="-30%" y="-30%" width="160%" height="160%"><feGaussianBlur stdDeviation="5"/></filter></defs>
  <rect width="1000" height="500" fill="#f2efe9"/>
  <g transform="translate(-7 -13) scale(.33333)" fill="none" stroke-linejoin="round" stroke-linecap="round">
    ${area(['705,40 905,40 912,95 870,115 825,125 810,92 755,112 735,75'], 'url(#h)', 'stroke="#f2b8b0" stroke-width="2"')}
    ${area(['875,40 905,40 905,75'], '#d2cccc')}
    ${area(['40,1090 100,1130 21,1215 21,1115', '515,1045 570,1035 585,1070 545,1105 515,1085', '100,1410 140,1385 180,1430 120,1440', '885,1250 920,1235 930,1265 895,1285', '320,1480 370,1475 380,1520 330,1535', '1200,65 1290,45 1280,80 1210,85'], park)}
    ${area(['140,1270 200,1250 245,1275 205,1355 150,1330', '700,970 770,960 840,995 830,1015 765,1020 710,1000', '820,1160 960,1115 1050,1150 1010,1235 880,1200 820,1215', '575,1538 600,1480 650,1470 690,1430 700,1538', '1120,605 1165,600 1150,625 1115,625', '270,1400 340,1420 340,1450 280,1420', '405,1120 445,1120 450,1155 405,1145'], wood)}
    ${area(['985,790 1030,800 1060,850 1030,870 980,840', '600,1460 690,1420 690,1450 620,1470', '880,1490 1010,1485 1015,1538 900,1538', '980,1300 1055,1285 1055,1330 1000,1330'], '#dcdcc0')}
    ${area(['1355,1155 1388,1155 1385,1180 1355,1175', '450,890 480,905 470,935 450,925'], '#c9c3a8')}
    ${area(['530,840 590,830 600,870 640,900 590,940 560,960 540,900', '890,545 935,555 930,585 905,575', '1040,655 1070,635 1100,645 1085,670', '1100,620 1140,620 1135,640 1105,640', '980,715 1000,710 1000,740 980,735', '1020,720 1070,695 1090,720 1050,740 1040,725', '1075,780 1110,785 1110,800 1080,800', '360,880 375,930 350,950', '1370,190 1390,190 1390,210 1370,205', '670,1230 740,1250 780,1400 820,1538 720,1538 690,1430 670,1330', '960,1160 1050,1160 1050,1240 1000,1240', '430,1440 500,1430 510,1470 440,1500', '990,960 1060,920 1110,900 1140,960 1090,1050 1020,1010', '870,1390 1060,1380 1290,1440 1290,1538 1010,1538 880,1490', '1565,1310 1600,1300 1600,1340 1568,1355', '1605,1185 1635,1190 1640,1210 1610,1215', '2397,1245 2440,1255 2420,1280 2400,1270'], grey)}
    ${scatter(300, 680, 1190, 1330, 1530, 34, ['#dadada', '#dadada', '#d4d4d4', '#dadada', lime, wood, '#e8e4dc', '#ececdc'])}
    ${scatter(70, 1060, 1030, 1400, 1230, 26, [grey, grey, lime, '#efefd4'])}
    ${scatter(50, 980, 790, 1140, 1060, 24, [grey, '#ddd', lime, '#dcdcc0'])}
    ${scatter(34, 1180, 570, 1340, 690, 17, [grey, lime, '#d2d2c0'])}
    ${scatter(30, 450, 800, 700, 1010, 20, [grey, grey, lime])}
    ${scatter(34, 690, 1060, 900, 1180, 24, [grey, lime, wood])}
    ${scatter(26, 1390, 1180, 1530, 1450, 30, ['#f0f1d6', lime, '#f0f1d6'])}
    ${scatter(20, 410, 1130, 520, 1200, 16, ['#d5ecc0'])}
    ${scatter(16, 1590, 1140, 1670, 1280, 18, [grey, lime])}
    ${area(['2562,1150 2580,1150 2590,1180 2620,1200 2625,1235 2650,1250 2620,1260 2610,1235 2575,1215'], '#d6e3c0')}
    ${scatter(12, 2260, 940, 2330, 970, 20, ['#eef1d8'])}
    ${area(reserve, wood, 'stroke="#9ccb9a" stroke-width="6"')}
    <g stroke="#c4dcc0" stroke-width="14">${outlines.map(s => `<polygon points="${s}"/>`).join('')}</g>
    <g stroke="#a6cda4" stroke-width="3">${outlines.map(s => `<polygon points="${s}"/>`).join('')}</g>
    ${line(wiggle('730,925 770,915 800,935 880,925 850,960 940,940 1000,960 985,1000 1030,1010 960,1020 900,1010 870,985 820,960 740,935', 6), '#a6d0a6', 6)}
    ${area(['1300,62 1330,70 1350,60 1400,68 1410,50 1410,90 1385,130 1320,135 1290,125 1250,135 1240,112 1205,130 1165,150 1150,125 1180,130 1210,115 1200,90 1240,100 1280,85', '835,955 890,975 930,960 980,975 985,1005 930,990 900,1000 850,975', '1790,865 1860,880 1820,950 1790,1000 1720,1015 1690,1040 1680,1010 1740,980 1765,940 1720,920 1735,890', '2400,1215 2435,1230 2470,1190 2478,1190 2470,1230 2430,1255 2410,1240'], water, `stroke="${water}" stroke-width="4"`)}
    ${area(['1685,930 1725,935 1730,975 1700,960'], park)}
    ${line(wiggle('21,1360 80,1360 110,1300 120,1370 90,1400 100,1455 150,1450 170,1420 210,1435 205,1480 170,1505', 7), water, 14)}
    ${line(wiggle('310,1538 320,1500 350,1465 385,1490 390,1538', 6), water, 16)}${line(wiggle('530,1528 570,1500 590,1480 575,1430', 5), water, 12)}
    ${many(minorL, '#bcbcc0', 3, '', 2, 30)}
    <g transform="translate(1500 0)">${many(minorR, '#bcbcc0', 3, '', 2, 30)}</g>
    ${streets(280, 690, 1200, 1320, 1530, 70)}${streets(56, 1050, 1050, 1320, 1250, 80)}${streets(46, 900, 800, 1120, 1060, 60)}${streets(22, 1190, 580, 1320, 680, 50)}${streets(24, 690, 1040, 880, 1200, 70)}${streets(16, 1600, 1150, 1660, 1260, 50)}
    ${many(riverL, water, 5, '', 7)}${many(creekL, water, 4, '', 5)}
    ${line(wiggle('1215,455 1250,400 1240,380 1310,300 1400,280 1530,235', 6), '#cfe3e8', 3)}
    <g transform="translate(1500 0)">${many(riverR, water, 5, '', 9)}${many(creekR, water, 4, '', 6)}${line(wiggle('0,250 60,235 130,235 165,210', 5), '#cfe3e8', 3)}
    ${line(wiggle('0,1470 60,1495 180,1505 260,1490 290,1460 300,1390 380,1340 420,1310', 9), '#b9dcae', 4)}${line(wiggle('1150,1280 1180,1305 1250,1320 1290,1400 1275,1480 1290,1520 1345,1535', 7), '#c9b3cc', 3, dash)}
    ${line(wiggle('875,970 905,930 950,880', 2), '#cfe3e8', 3)}</g>
    ${line(wiggle('1380,1440 1440,1490 1530,1500', 8), '#b9dcae', 6)}
    ${many(boundL, '#c3a9c6', 3, dash)}<g transform="translate(1500 0)">${many(boundR, '#c3a9c6', 3, dash)}</g>
    ${many(['300,1130 370,1110 390,1125 480,1100 520,1150 565,1150 560,1220 610,1240', '1210,1430 1300,1430 1340,1440 1370,1500 1420,1470 1530,1465', '120,1480 120,1430 170,1430 170,1538', '670,1330 675,1410 750,1538'], '#c3a9c6', 3, dash, 3)}
    ${many(yellowL, '#f7c27c', 6)}<g transform="translate(1500 0)">${many(yellowR, '#f7c27c', 5)}</g>
    ${many(orangeL, '#f9967c', 7)}<g transform="translate(1500 0)">${many(orangeR, '#f9967c', 7)}</g>
    ${many(railL, '#8a8880', 3)}<g transform="translate(1500 0)">${many(railR, '#77706a', 3)}</g>
    ${many(['1550,40 1530,85 1465,190 1395,270 1388,335 1375,365 1305,460 1280,525 1215,680 1195,760 1148,912 1135,945 1100,1025 1065,1065 1060,1100 1070,1150 1055,1270 1060,1340 1075,1420 1115,1538', '1135,945 1190,1050 1205,1100 1250,1130 1310,1280 1312,1400 1275,1490 1272,1538', '720,1190 745,1205 780,1280 790,1390 815,1440 820,1490 840,1538', '825,1502 870,1490 930,1472 1035,1480 1110,1472 1180,1452 1220,1460 1275,1490', '1035,1480 1045,1538', '832,495 835,525 862,570 865,610'], '#e46f8c', 8)}
    <path d="M1366 762C1374 735 1386 706 1408 700C1430 696 1438 712 1430 726C1418 744 1390 752 1366 762Z" fill="url(#cast)" filter="url(#soft)"/>
    <path d="M1366 762C1358 732 1331 718 1331 682A36 36 0 0 1 1402 682C1402 718 1374 732 1366 762Z" fill="url(#pin)" stroke="#2e6c97" stroke-width="3"/><circle cx="1366" cy="682" r="14" fill="#fff" stroke="#3a77a5" stroke-width="2"/>
    <g fill="#8461c4"><path d="M1089 950q4 4 4 14l14 10v6l-14-6v8l6 5v3l-10-3-10 3v-3l6-5v-8l-14 6v-6l14-10q0-10 4-14z"/><path transform="translate(1503 120)" d="M1089 950q4 4 4 14l14 10v6l-14-6v8l6 5v3l-10-3-10 3v-3l6-5v-8l-14 6v-6l14-10q0-10 4-14z"/></g>
  </g>
  <g font-family="Noto Sans, sans-serif" font-size="10" text-anchor="middle" fill="#222" stroke="#fff" stroke-opacity=".75" stroke-width="2" stroke-linejoin="round" paint-order="stroke">
    <text x="178" y="326">Liberty Hill</text><text x="356" y="350">Georgetown</text><text x="225" y="403">Leander</text><text x="247" y="447">Cedar Park</text><text x="451" y="429">Hutto</text><text x="355" y="459" font-size="13">Round Rock</text>
    <text x="866" y="166">Cameron</text><text x="845" y="334">Rockdale</text><text x="548" y="404">Taylor</text>
    <g font-style="italic" fill="#9a6b9e"><text x="388" y="321">Williamson</text><text x="388" y="333">County</text><text x="868" y="219">Milam</text><text x="868" y="231">County</text></g>
    <g font-style="italic" fill="#1e8a2c"><text x="126" y="400">Balcones</text><text x="126" y="412">Canyonlands</text><text x="126" y="424">National</text><text x="126" y="436">Wildlife</text><text x="126" y="448">Refuge</text><text x="588" y="289">Granger</text><text x="588" y="301">Wildlife</text><text x="588" y="313">Management</text><text x="588" y="325">Area</text></g>
    <text x="64" y="495" font-style="italic" fill="#4d80b3">Lake Travis</text>
  </g>
  <g font-family="Noto Sans, sans-serif" font-size="10" text-anchor="middle" fill="#6b2242"><rect x="245" y="133" width="47" height="17" rx="1" fill="#eaccd3" stroke="#d7929f"/><text x="268" y="146">TX 195</text><rect x="406" y="143" width="34" height="17" rx="1" fill="#eaccd3" stroke="#d7929f"/><text x="423" y="156">I 35</text></g>`;
}

define('geo-map', `
<style>
  :host { display: block; position: relative; width: 1000px; height: 500px; overflow: hidden; }
  .tiles { display: block; }
  .zoom { position: absolute; left: 10px; top: 10px; border: 2px solid rgba(0,0,0,.2); border-radius: 4px; background-clip: padding-box; background: #fff; }
  .zoom button { display: block; border: 0; background: #fff; width: 30px; height: 30px; padding: 0; font: bold 22px/30px "DejaVu Sans Mono", monospace; color: #000; border-radius: 0 0 2px 2px; }
  .zoom button:first-child { height: 31px; border-bottom: 1px solid #ccc; border-radius: 2px 2px 0 0; }
  a { position: absolute; right: 0; bottom: 0; padding: 0 5px; background: rgba(255,255,255,.7); color: #0078a8; font: 12px/17px "Liberation Sans", sans-serif; text-decoration: none; }
</style>
<svg class="tiles" width="1000" height="500" viewBox="0 0 1000 500"></svg>
<div class="zoom"><button aria-label="Zoom in">+</button><button aria-label="Zoom out">−</button></div>
<a href="#leaflet">Leaflet</a>`, r => { r.querySelector('.tiles').innerHTML = drawMap(); });
</script>
</body>
</html>
